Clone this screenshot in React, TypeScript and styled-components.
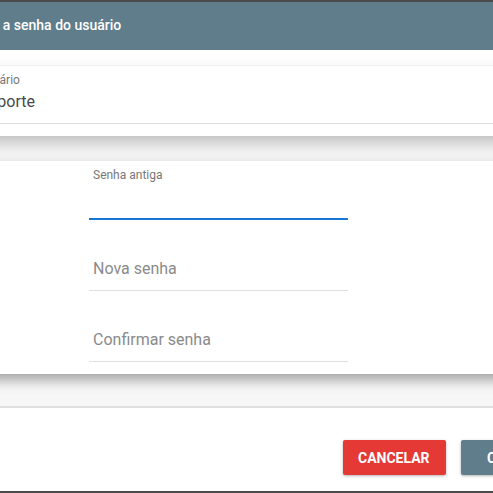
import React from 'react';
import styled, { createGlobalStyle } from 'styled-components';

const GlobalStyle = createGlobalStyle`
  html, body {
    margin: 0;
    padding: 0;
    overflow: hidden;
    background: #4a4a4a;
    font-family: Roboto, 'Liberation Sans', Arial, sans-serif;
  }
`;

const Dialog = styled.div`
  margin: 2px 0 0 -57px;
  width: 665px;
  height: 489px;
  background: #fff;
  display: flex;
  flex-direction: column;
`;

const Header = styled.div`
  height: 48px;
  flex-shrink: 0;
  background: #607d8b;
  color: #fff;
  display: flex;
  align-items: center;
  padding: 0 0 2px 19px;
  box-sizing: border-box;
  font-size: 14px;
  font-weight: 500;
`;

const Body = styled.div`
  padding-top: 15px;
  background: #fff;
  display: flex;
  flex-direction: column;
`;

const UserCard = styled.div`
  position: relative;
  z-index: 1;
  background: #fff;
  border-top: 1px solid #eeeeee;
  padding: 6px 0 12px 34px;
  box-shadow: 0 8px 16px -2px rgba(0, 0, 0, 0.25);
`;

const ReadOnlyField = styled.div`
  border-bottom: 1px solid #dddddd;
  padding: 0 0 11px 2px;
  display: flex;
  flex-direction: column;
  gap: 4px;
`;

const SmallLabel = styled.span`
  font-size: 12px;
  line-height: 16px;
  color: #777;
`;

const Value = styled.span`
  font-size: 16px;
  line-height: 20px;
  color: #4a4a4a;
`;

const Panel = styled.div`
  background: #f7f7f7;
  padding: 25px 0 32px;
  border-bottom: 2px solid #e0e0e0;
`;

const FormCard = styled.div`
  position: relative;
  background: #fff;
  padding: 0 0 12px 146px;
  box-shadow: 0 6px 12px rgba(0, 0, 0, 0.35);
`;

const Field = styled.div<{ $height: number; $focused?: boolean }>`
  position: relative;
  box-sizing: border-box;
  width: 259px;
  height: ${(p) => p.$height}px;
  border-bottom: ${(p) => (p.$focused ? '2px solid #1976d2' : '1px solid #e0e0e0')};
`;

const FieldLabel = styled.label<{ $floating?: boolean }>`
  position: absolute;
  left: 4px;
  bottom: ${(p) => (p.$floating ? '36px' : '12px')};
  font-size: ${(p) => (p.$floating ? '12px' : '16px')};
  line-height: ${(p) => (p.$floating ? '14px' : '18px')};
  color: ${(p) => (p.$floating ? '#777' : '#8a8a8a')};
`;

const Footer = styled.div`
  display: flex;
  justify-content: flex-end;
  align-items: flex-start;
  gap: 15px;
  padding: 32px 16px 0;
`;

const Button = styled.button<{ $color: string; $width: number; $pad: number }>`
  box-sizing: border-box;
  width: ${(p) => p.$width}px;
  height: 35px;
  border: none;
  border-radius: 2px;
  background: ${(p) => p.$color};
  color: #fff;
  font-family: Roboto, 'Liberation Sans', Arial, sans-serif;
  font-size: 14px;
  font-weight: 700;
  text-transform: uppercase;
  text-align: left;
  padding: 0 0 0 ${(p) => p.$pad}px;
  box-shadow: 0 1px 3px rgba(0, 0, 0, 0.3);
  cursor: pointer;
`;

const App: React.FC = () => {
  return (
    <>
      <GlobalStyle />
      <Dialog>
        <Header>Altere a senha do usuário</Header>
        <Body>
          <UserCard>
            <ReadOnlyField>
              <SmallLabel>Usuário</SmallLabel>
              <Value>Suporte</Value>
            </ReadOnlyField>
          </UserCard>
          <Panel>
            <FormCard>
              <Field $height={59} $focused>
                <FieldLabel $floating>Senha antiga</FieldLabel>
              </Field>
              <Field $height={71}>
                <FieldLabel>Nova senha</FieldLabel>
              </Field>
              <Field $height={71}>
                <FieldLabel>Confirmar senha</FieldLabel>
              </Field>
            </FormCard>
          </Panel>
        </Body>
        <Footer>
          <Button $color="#e53935" $width={103} $pad={15}>Cancelar</Button>
          <Button $color="#607d8b" $width={131} $pad={26}>Confirmar</Button>
        </Footer>
      </Dialog>
    </>
  );
};

export default App;
